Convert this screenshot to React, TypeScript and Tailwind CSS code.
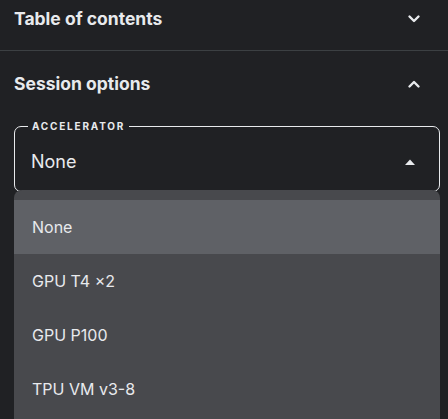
import React from 'react';

const options = ['None', 'GPU T4 ×2', 'GPU P100', 'TPU VM v3-8'];

const Chevron: React.FC<{ up?: boolean }> = ({ up }) => (
  <svg width="14" height="14" viewBox="0 0 14 14" className={up ? 'rotate-180' : ''}>
    <path d="M2.5 4.5 L7 9 L11.5 4.5" fill="none" stroke="#e8eaed" strokeWidth="2.4" strokeLinecap="round" strokeLinejoin="round" />
  </svg>
);

const App: React.FC = () => {
  return (
    <div className="w-[448px] h-[419px] overflow-hidden bg-[#202124] text-[#e8eaed] font-['Inter',sans-serif]">
      <div className="flex items-center justify-between h-[38px] pl-[14px] pr-[27px]">
        <span className="text-[17.5px] font-bold">Table of contents</span>
        <Chevron />
      </div>
      <div className="h-[13px] border-b border-[#3c4043]" />
      <div className="flex items-center justify-between h-[66px] pl-[14px] pr-[27px]">
        <span className="text-[17.5px] font-bold">Session options</span>
        <Chevron up />
      </div>
      <div className="pl-[14px] pr-[8px]">
        <fieldset className="border-[1.5px] border-[#e8eaed] rounded-[7px] mt-[3px] px-[13px]">
          <legend className="px-[4px] text-[10px] font-bold tracking-[1.8px] leading-[12px]">ACCELERATOR</legend>
          <div className="flex items-center justify-between h-[59px] pl-[3px] pr-[11px]">
            <span className="text-[18px]">None</span>
            <svg width="10" height="6" viewBox="0 0 10 6">
              <path d="M0 6 L5 0.5 L10 6 Z" fill="#e8eaed" />
            </svg>
          </div>
        </fieldset>
        <div className="-mt-[2px] bg-[#48494d] rounded-t-[8px] pt-[10px] pb-[20px]">
          {options.map((o, i) => (
            <div
              key={o}
              className={`h-[54px] flex items-center pl-[18px] text-[16px] ${i === 0 ? 'bg-[#5f6166]' : ''}`}
            >
              {o}
            </div>
          ))}
        </div>
      </div>
    </div>
  );
};

export default App;
